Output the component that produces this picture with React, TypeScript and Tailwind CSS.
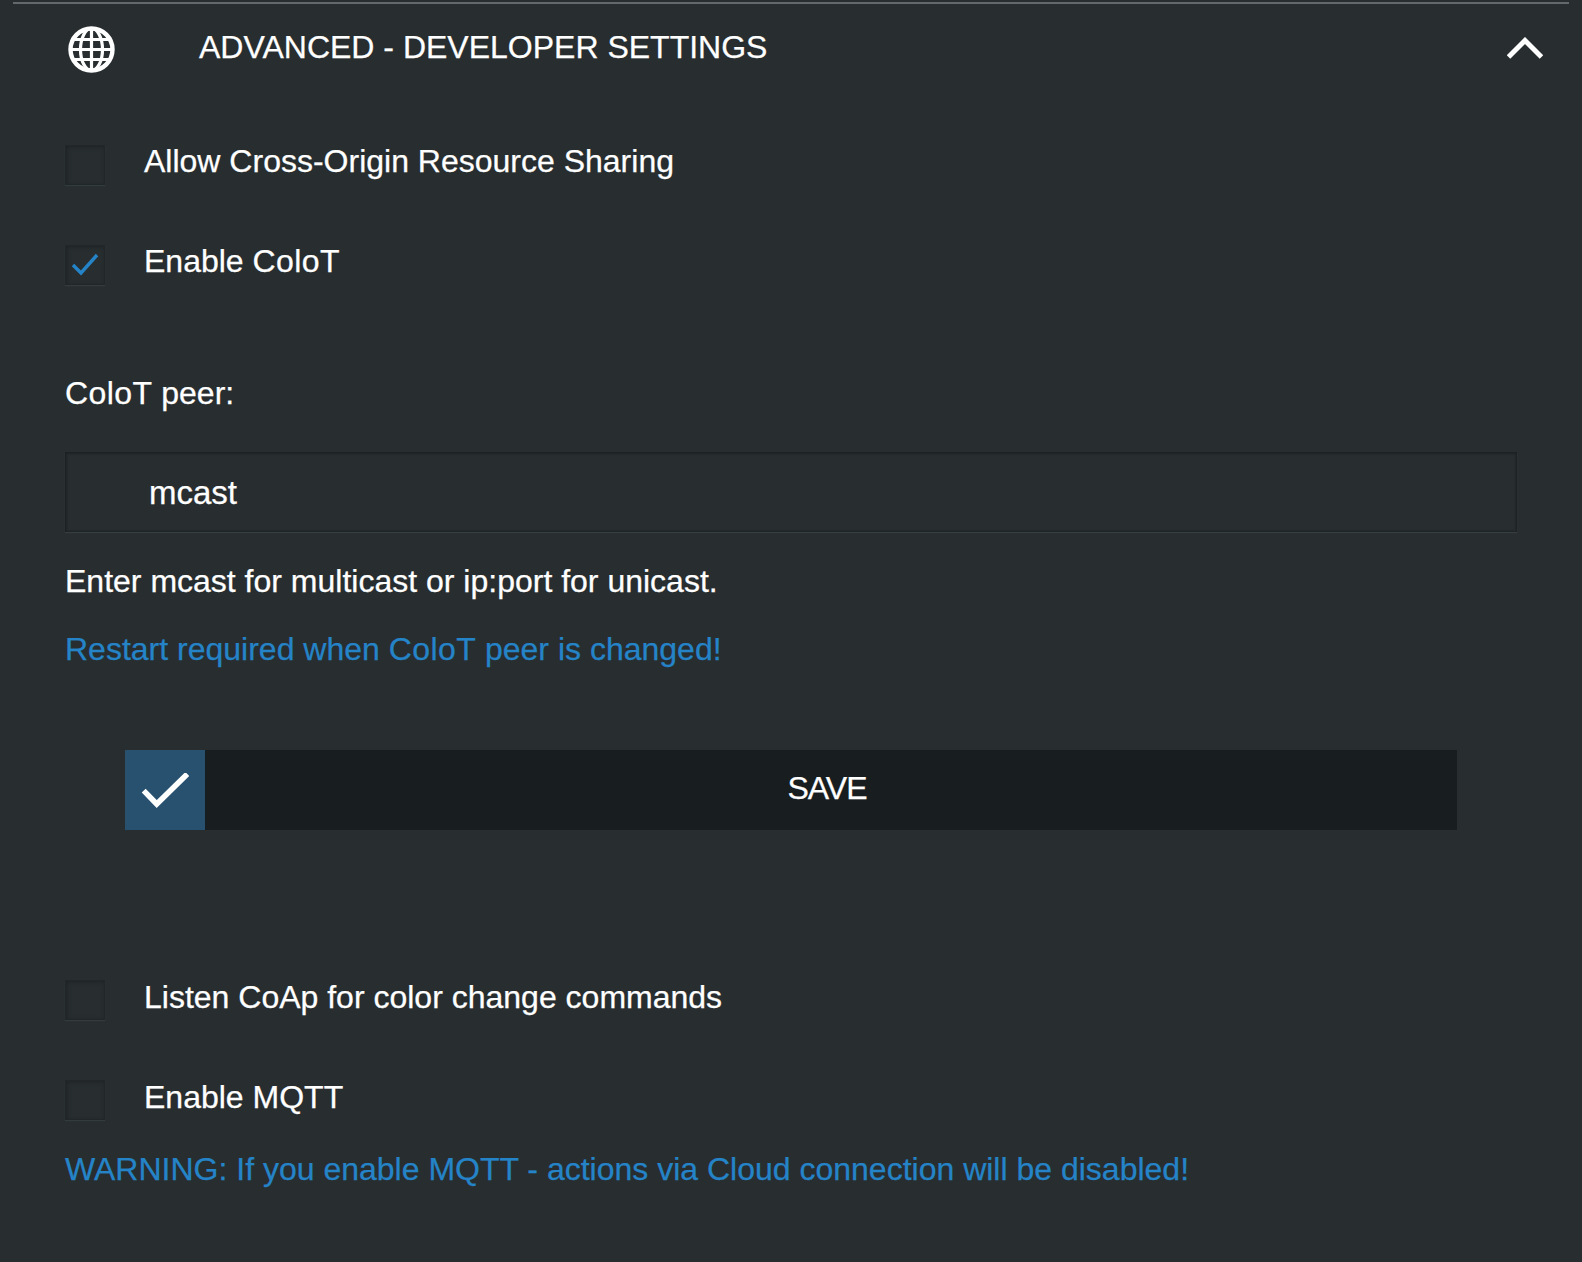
import React from 'react';

const Globe = () => (
  <svg width="47" height="47" viewBox="0 0 47 47" fill="none" stroke="#fff" strokeWidth="3.2">
    <circle cx="23.5" cy="23.5" r="21" strokeWidth="4.4" />
    <ellipse cx="23.5" cy="23.5" rx="11" ry="21" />
    <path d="M23.5 2v43M2 23.5h43M5 13.5h37M5 33.5h37" />
  </svg>
);

const ColoT = () => <span className="tracking-[0.4px]">ColoT</span>;

const CheckRow = ({ label, checked, className, labelClass }: { label: React.ReactNode; checked?: boolean; className?: string; labelClass?: string }) => (
  <div className={`flex items-center h-10 ${className || ''}`}>
    <div className="w-10 h-10 flex items-center justify-center shadow-[inset_0_0_0_1px_#212628,inset_1px_1px_5px_#1a1e20,0_1px_1px_#343b3d]">
      {checked && (
        <svg width="30" height="24" viewBox="0 0 30 24" fill="none" stroke="#2584c8" strokeWidth="3.4" className="-mt-[2px]">
          <path d="M3 13l8 8L27 3" />
        </svg>
      )}
    </div>
    <span className={`ml-[39px] text-[32px] leading-10 ${labelClass || '-mt-[8px]'}`}>{label}</span>
  </div>
);

export default function App() {
  return (
    <div className="w-[1582px] h-[1262px] bg-[#282e30] text-white overflow-hidden font-['Liberation_Sans',Arial,sans-serif] [-webkit-text-stroke:0.25px]">
      <div className="ml-[13px] mr-[13px] h-[2px] mt-[2px] bg-[#62686b]" />
      <div className="flex items-center h-[47px] mt-[22px] pl-[68px] pr-[39px]">
        <Globe />
        <span className="ml-[84px] text-[32px] leading-[47px] -mt-[4px] flex-1">ADVANCED - DEVELOPER SETTINGS</span>
        <svg width="36" height="22" viewBox="0 0 36 22" fill="none" stroke="#fff" strokeWidth="5" className="-mt-[3px]">
          <path d="M1.500 20L18 3.500 34.500 20" />
        </svg>
      </div>

      <div className="pl-[65px] pr-[65px]">
        <CheckRow label="Allow Cross-Origin Resource Sharing" className="mt-[72px]" />
        <CheckRow label={<>Enable <ColoT /></>} checked className="mt-[60px]" />

        <div className="mt-[88px] text-[32px] leading-10"><ColoT /> peer:</div>
        <div className="mt-[39px] h-20 flex items-center pl-[84px] text-[33px] shadow-[inset_0_1px_3px_#1c2022,inset_1px_0_3px_#1c2022,inset_-1px_0_2px_#212628,0_1px_1px_#373e40]">
          <span className="mt-[2px]">mcast</span>
        </div>
        <div className="mt-[29px] text-[32px] leading-10">Enter mcast for multicast or ip:port for unicast.</div>
        <div className="mt-[28px] text-[32px] leading-10 text-[#2584c8]">Restart required when <ColoT /> peer is changed!</div>

        <div className="mt-[81px] mx-[60px] h-20 flex bg-[#181e1f]">
          <div className="w-20 h-20 bg-[#28506f] flex items-center justify-center">
            <svg width="48" height="36" viewBox="0 0 48 36" fill="none" stroke="#fff" strokeWidth="5.5" className="mt-[1px]">
              <path d="M2.700 17.700L15.700 31 46.300 1" />
            </svg>
          </div>
          <div className="flex-1 flex items-center justify-center pr-20 text-[32px] tracking-[-1px]">
            <span className="-mt-[4px] ml-[72px]">SAVE</span>
          </div>
        </div>

        <CheckRow label="Listen CoAp for color change commands" className="mt-[150px]" labelClass="-mt-[6px]" />
        <CheckRow label="Enable MQTT" className="mt-[60px]" labelClass="-mt-[6px]" />
        <div className="mt-[29px] text-[32px] leading-10 text-[#2584c8]">WARNING: If you enable MQTT - actions via Cloud connection will be disabled!</div>
      </div>
    </div>
  );
}
